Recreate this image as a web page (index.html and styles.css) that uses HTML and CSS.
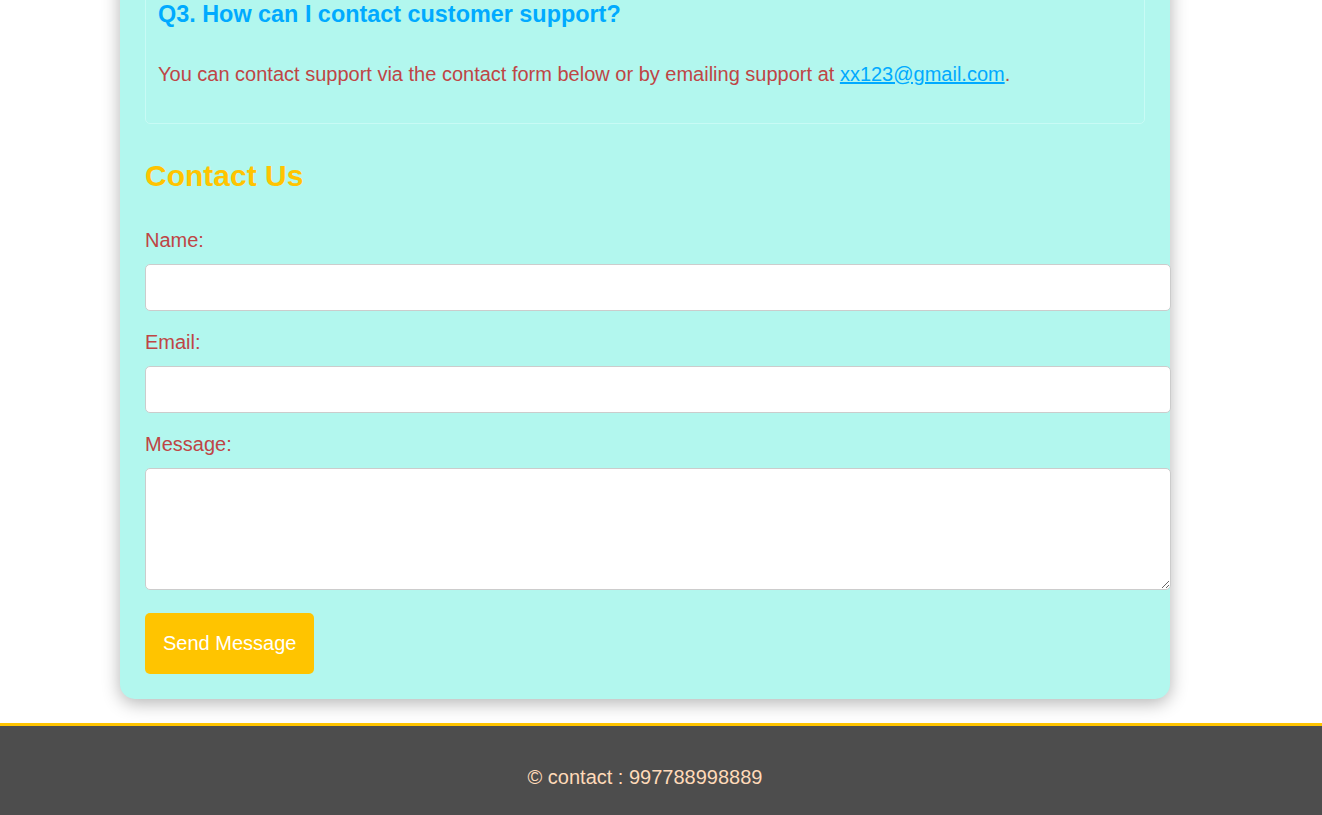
FILE: index.html
```html
<!DOCTYPE html>
<html lang="en">
<head>
<meta charset="utf-8">
<title>FAQ &amp; Contact</title>
<link rel="stylesheet" href="styles.css">
</head>
<body>
<div class="page">
  <main class="card">
    <section class="faq-item">
      <h3 class="faq-q">Q3. How can I contact customer support?</h3>
      <p class="faq-a">You can contact support via the contact form below or by emailing support at <a class="mail" href="#">xx123@gmail.com</a>.</p>
    </section>

    <h2 class="contact-title">Contact Us</h2>
    <form class="contact-form">
      <label class="field-label" for="name">Name:</label>
      <input class="field-input" type="text" id="name">
      <label class="field-label" for="email">Email:</label>
      <input class="field-input" type="email" id="email">
      <label class="field-label" for="msg">Message:</label>
      <textarea class="field-area" id="msg"></textarea>
      <button class="send-btn" type="button">Send Message</button>
    </form>
  </main>
</div>
<footer class="site-footer">
  <p class="footer-text">© contact : 997788998889</p>
</footer>
</body>
</html>
```
FILE: styles.css
```css
html, body {
  margin: 0;
  padding: 0;
  background: #ffffff;
}
body {
  font-family: "Liberation Sans", Arial, sans-serif;
  font-size: 20px;
  color: #bf4545;
}
.page {
  width: 1290px;
}
.card {
  width: 1000px;
  padding: 25px;
  margin: -38px auto 24px;
  background: #b2f7ee;
  border-radius: 15px;
  box-shadow: 0 4px 18px rgba(0, 0, 0, 0.3);
}
.faq-item {
  border: 1px solid #c8fbf5;
  border-radius: 5px;
  padding: 13px 12px 37px;
}
.faq-q {
  margin: 0 0 34.5px;
  font-size: 23.4px;
  font-weight: bold;
  color: #00aaff;
}
.faq-a {
  margin: 0;
  color: #bf4545;
}
.mail {
  color: #00aaff;
  text-decoration: underline;
}
.contact-title {
  margin: 35px 0 36px;
  font-size: 30px;
  font-weight: bold;
  color: #ffc400;
}
.contact-form {
  margin: 0;
}
.field-label {
  display: block;
  margin-bottom: 12px;
  color: #bf4545;
}
.field-input,
.field-area {
  display: block;
  width: 100%;
  padding: 12px;
  border: 1px solid #cccccc;
  border-radius: 5px;
  background: #ffffff;
  font-family: "Liberation Sans", Arial, sans-serif;
  font-size: 16px;
  margin: 0 0 20px;
}
.field-input {
  height: 21px;
}
.field-area {
  height: 96px;
  margin-bottom: 23.5px;
}
.send-btn {
  display: block;
  background: #ffc400;
  color: #ffffff;
  border: none;
  border-radius: 5px;
  padding: 19px 18px;
  font-family: "Liberation Sans", Arial, sans-serif;
  font-size: 20px;
  line-height: 23px;
}
.site-footer {
  background: #4d4d4d;
  border-top: 3px solid #ffc400;
  padding: 39.5px 0 26px;
}
.footer-text {
  width: 1290px;
  margin: 0;
  text-align: center;
  color: #ffdab9;
  font-size: 20px;
}
```
